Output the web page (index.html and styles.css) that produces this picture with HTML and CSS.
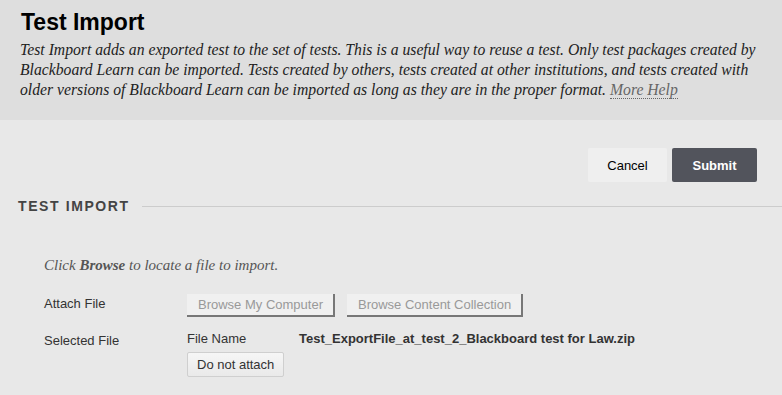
FILE: index.html
```html
<!DOCTYPE html>
<html lang="en">
<head>
    <meta charset="UTF-8">
    <title>Test Import</title>
    <link rel="stylesheet" href="styles.css">
</head>
<body>
    <div class="page-header">
        <h1 class="page-title">Test Import</h1>
        <p class="page-help">
            Test Import adds an exported test to the set of tests. This is a useful way to reuse a test. Only test packages created by<br>
            Blackboard Learn can be imported. Tests created by others, tests created at other institutions, and tests created with<br>
            older versions of Blackboard Learn can be imported as long as they are in the proper format.
            <a href="#" class="more-help">More Help</a>
        </p>
    </div>

    <div class="content">
        <div class="actions">
            <button class="btn btn-cancel">Cancel</button>
            <button class="btn btn-submit">Submit</button>
        </div>

        <div class="step-title">
            <h2>Test Import</h2>
            <span class="rule"></span>
        </div>

        <div class="step">
            <p class="instructions">Click <b>Browse</b> to locate a file to import.</p>

            <div class="field">
                <div class="label">Attach File</div>
                <div class="value value-row">
                    <button class="browse" disabled>Browse My Computer</button>
                    <button class="browse" disabled>Browse Content Collection</button>
                </div>
            </div>

            <div class="field">
                <div class="label">Selected File</div>
                <div class="value">
                    <div class="file-row">
                        <span class="file-label">File Name</span>
                        <span class="file-name">Test_ExportFile_at_test_2_Blackboard test for Law.zip</span>
                    </div>
                    <button class="detach">Do not attach</button>
                </div>
            </div>
        </div>
    </div>
</body>
</html>
```

FILE: styles.css
```css
body {
    margin: 0;
    background-color: #e8e8e8;
    font-family: "Liberation Sans", Arial, sans-serif;
    font-size: 13px;
    color: #333;
}
.page-header {
    background: #dedede;
    padding: 9px 20px 20px 20px;
}
.page-title {
    margin: 0 0 5px 1px;
    font-size: 23px;
    line-height: 26px;
    color: #000;
}
.page-help {
    margin: 0;
    font-family: "Liberation Serif", Georgia, serif;
    font-style: italic;
    font-size: 15.7px;
    line-height: 20px;
    color: #222;
    white-space: nowrap;
}
.more-help {
    color: #666;
    text-decoration: none;
    border-bottom: 1px dotted #666;
}
.content {
    padding: 28px 25px 0 18px;
}
.actions {
    display: flex;
    justify-content: flex-end;
    gap: 5px;
}
.btn {
    font-family: "Liberation Sans", Arial, sans-serif;
    font-size: 13px;
    height: 34px;
    border: none;
    border-radius: 2px;
    cursor: pointer;
}
.btn-cancel {
    width: 79px;
    background: #efefef;
    color: #000;
}
.btn-submit {
    width: 85px;
    background: #52545c;
    color: #fff;
    font-weight: bold;
}
.step-title {
    display: flex;
    align-items: center;
    gap: 12px;
    margin-top: 16px;
    margin-right: -25px;
}
.step-title h2 {
    margin: 0;
    font-size: 14px;
    letter-spacing: 1.6px;
    text-transform: uppercase;
    color: #444;
}
.rule {
    flex: 1;
    border-top: 1px solid #cccccc;
}
.step {
    padding: 43px 0 0 26px;
}
.instructions {
    margin: 0 0 20px 0;
    font-family: "Liberation Serif", Georgia, serif;
    font-style: italic;
    font-size: 15px;
    color: #555;
}
.field {
    display: flex;
    margin-bottom: 14px;
}
.label {
    width: 143px;
    padding-top: 2px;
}
.value {
    display: flex;
    flex-direction: column;
    align-items: flex-start;
}
.value-row {
    flex-direction: row;
}
.browse {
    font-family: "Liberation Sans", Arial, sans-serif;
    font-size: 13px;
    color: #999;
    background: #f0f0f0;
    border: none;
    border-right: 2px solid #777;
    border-bottom: 2px solid #777;
    padding: 3px 10px 3px 11px;
    margin-right: 12px;
}
.file-row {
    display: flex;
    margin-bottom: 6px;
}
.file-label {
    width: 112px;
}
.file-name {
    font-weight: bold;
    color: #333;
}
.detach {
    font-family: "Liberation Sans", Arial, sans-serif;
    font-size: 13px;
    color: #333;
    height: 25px;
    padding: 0 9px;
    background: linear-gradient(#f6f6f6, #e9e9e9);
    border: 1px solid #cfcfcf;
    border-radius: 2px;
}
```
